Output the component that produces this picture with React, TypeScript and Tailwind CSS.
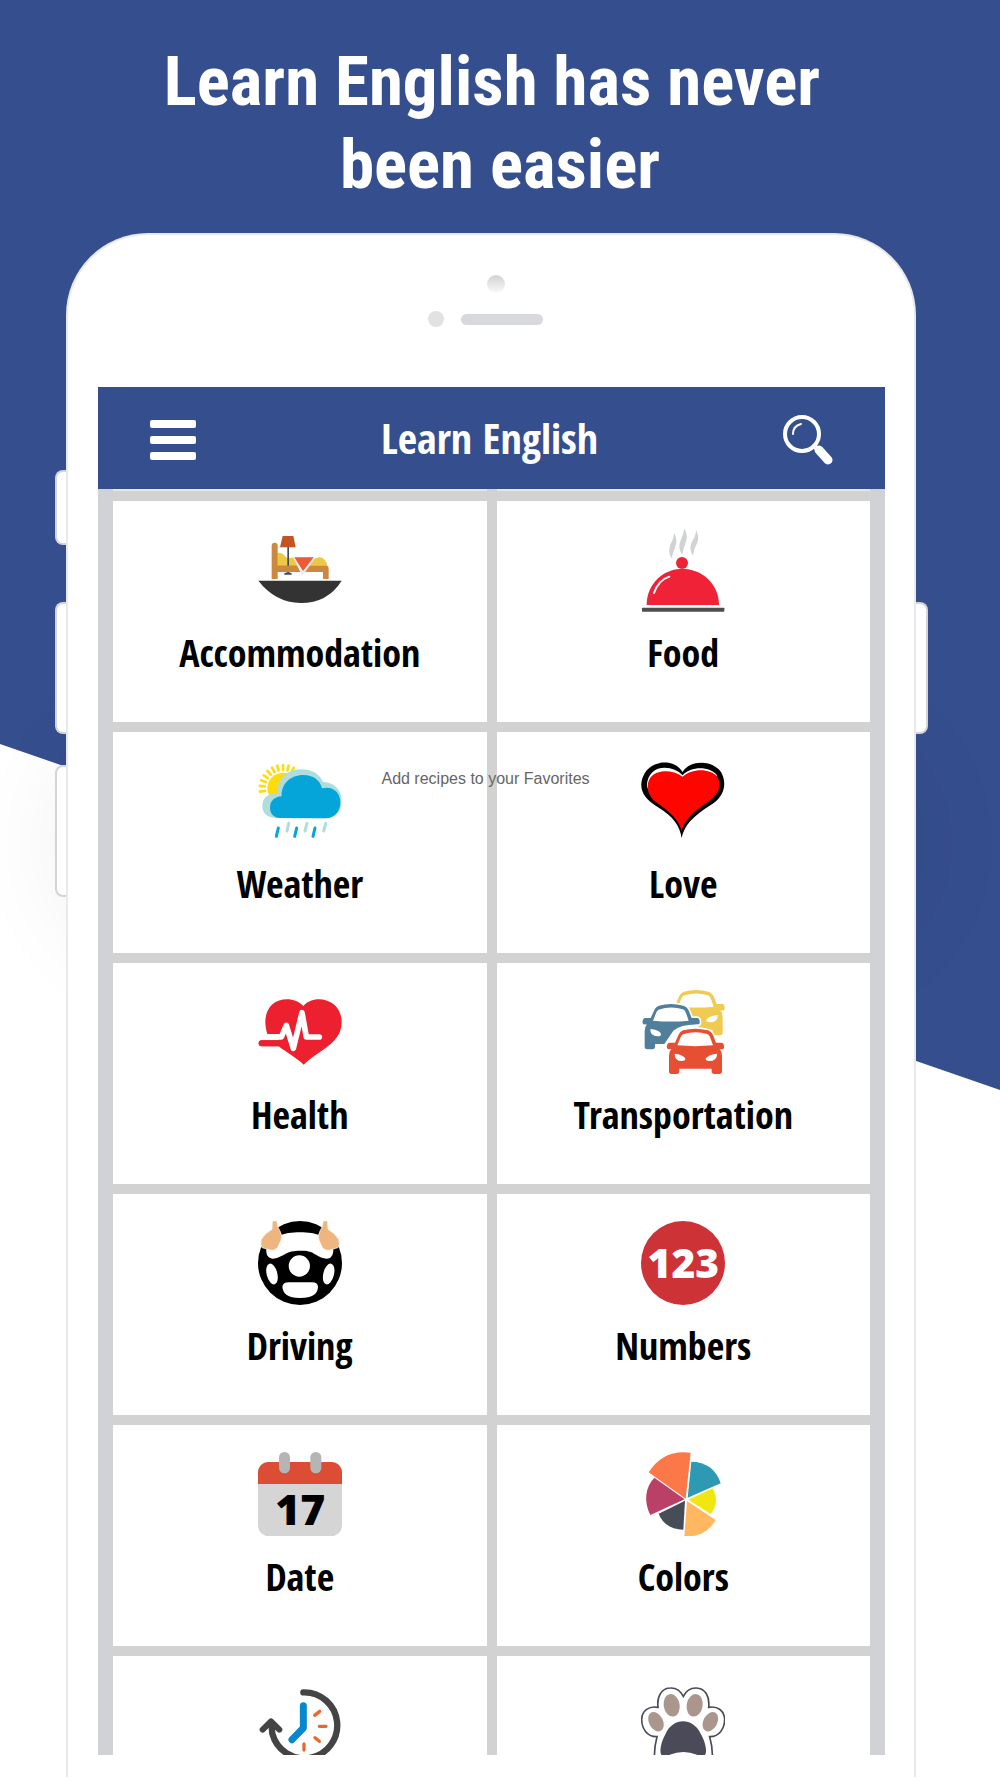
import type { ReactNode } from "react";
import clsx from "clsx";

function Icon({ viewBox, children }: { viewBox: string; children: ReactNode }) {
  return (
    <svg viewBox={viewBox} className="size-[84px] shrink-0" aria-hidden="true">
      {children}
    </svg>
  );
}

function BedIcon() {
  return (
    <Icon viewBox="54 51 252 252">
      <path d="M112 126 C122 124 130 128 135 136 L141 140 H162 L182 165 H112 Z" fill="#edc845" />
      <path d="M203 165 L222 144 Q245 130 260 155 L262 165 Z" fill="#edc845" />
      <path d="M95 104 a9 9 0 0 1 18 0 V164 H259 Q266 164 266 171 V204 H249 V183 H113 V204 H95 Z" fill="#cd8840" />
      <path d="M142 108 H147 V184 L155 187 V191 H133 V187 L142 184 Z" fill="#414d54" />
      <path d="M112 164 H180 V183 H112 Z" fill="#cd8840" />
      <path d="M128 75 H160 L167 109 H120 Z" fill="#c45424" />
      <path d="M159 139 H227 L187 195 Z" fill="#eeeeee" />
      <path d="M163 139 H221 L189 180 Z" fill="#ed5a36" />
      <path d="M55 209 H305 Q263 276 182 276 Q105 274 55 209 Z" fill="#333333" />
    </Icon>
  );
}

function FoodIcon() {
  return (
    <Icon viewBox="63 51 252 252">
      <g fill="#d0d2d3">
        <path d="M163 66 C174 91 168 101 163 115 Q157 128 156 143 C145 126 147 113 151 101 Q161 82 163 66 Z" />
        <path d="M193 52 C205 76 200 87 195 101 Q189 114 187 131 C175 114 177 101 182 88 Q191 70 193 52 Z" />
        <path d="M228 56 C239 80 234 91 228 103 Q221 116 219 134 C208 117 210 105 217 90 Q228 74 228 56 Z" />
      </g>
      <circle cx="186" cy="156" r="18" fill="#f02238" />
      <path d="M80 282 C80 218 130 176 180 174 H195 C247 177 297 219 297 282 Z" fill="#f02238" />
      <path d="M102 246 Q116 207 148 197" fill="none" stroke="#fff" strokeWidth="6" strokeLinecap="round" />
      <rect x="66" y="290" width="247" height="12" rx="2" fill="#4d4d4f" />
    </Icon>
  );
}

function WeatherIcon() {
  const rays = [-98, -84, -70, -56, -42, -28, -14, 0, 14, 28];
  return (
    <Icon viewBox="54 39 252 252">
      <circle cx="129" cy="127" r="47" fill="#ffdc0a" />
      {rays.map((deg) => (
        <path
          key={deg}
          d="M129 57 V72"
          stroke="#ffdc0a"
          strokeWidth="8"
          strokeLinecap="round"
          transform={`rotate(${deg} 129 127)`}
        />
      ))}
      <path d="M106 216 C78 214 67 198 67 179 C67 157 83 143 103 143 C118 143 110 137 114 122 C122 86 151 70 184 70 C216 70 239 84 249 108 C283 109 305 133 305 164 C305 194 287 217 256 217 Z" fill="#addddd" />
      <path d="M122 216 C101 216 90 202 90 185 C90 165 104 152 125 151 C123 113 152 87 190 87 C219 87 240 102 246 127 C278 119 301 139 301 169 C301 199 282 217 256 217 Z" fill="#05a5da" />
      <g fill="none" strokeWidth="9" strokeLinecap="round">
        <path d="M115 246 L109 271 M170 246 L164 271 M225 246 L219 271" stroke="#05a5da" />
        <path d="M146 232 L141 255 M201 232 L195 255 M257 232 L251 255" stroke="#addddd" />
      </g>
    </Icon>
  );
}

function LoveIcon() {
  return (
    <Icon viewBox="1203 39 252 252">
      <path d="M1328 78 C1350 40 1418 42 1443 78 C1464 115 1450 155 1411 178 C1359 211 1332 239 1325 276 C1319 239 1300 212 1254 184 C1212 159 1193 129 1210 90 C1228 45 1299 33 1328 78 Z" fill="#000" />
      <path d="M1328 88 C1352 60 1410 60 1431 88 L1424 96 Q1368 72 1328 98 Q1280 72 1236 98 L1226 125 H1221 C1219 96 1235 70 1264 66 Q1303 62 1328 88 Z" fill="#fff" />
      <path d="M1328 92 C1354 66 1412 66 1432 92 C1449 123 1433 149 1395 174 C1351 204 1330 231 1325 254 C1316 224 1297 205 1260 177 C1219 152 1216 117 1232 94 C1248 72 1294 68 1328 92 Z" fill="#ff0500" />
    </Icon>
  );
}

function HealthIcon() {
  return (
    <Icon viewBox="54 27 252 252">
      <path d="M190 75 C211 49 256 48 284 72 C309 96 312 138 291 168 C269 201 219 222 191 251 C166 228 142 216 116 196 H65 A9 9 0 0 1 65 178 H116 V159 H82 C72 129 73 92 97 70 C125 46 170 52 190 75 Z" fill="#ed2030" />
      <path d="M72 168 H124 L139 133 L160 202 L186 95 L199 168 H238" fill="none" stroke="#fff" strokeWidth="17" strokeLinecap="round" strokeLinejoin="round" />
      <path d="M65 178 H133 V196 H65 A9 9 0 0 1 65 178 Z" fill="#ed2030" />
    </Icon>
  );
}

// One car, drawn around its own windscreen so the three copies share a shape.
function Car({ x, y, color }: { x: number; y: number; color: string }) {
  return (
    <g transform={`translate(${x} ${y})`}>
      <path
        d="M51 5 Q86 -5 124 5 Q136 8 141 22 L149 42 H167 Q174 44 173 58 Q171 63 160 61 Q167 68 167 82 V130 Q166 136 160 136 H144 Q137 136 136 130 V120 H39 V130 Q38 136 32 136 H15 Q9 136 8 130 V82 Q8 68 15 61 Q4 63 2 58 Q0 44 8 42 H26 L36 20 Q41 8 51 5 Z"
        fill={color}
        stroke="#fff"
        strokeWidth="10"
        paintOrder="stroke"
      />
      <path d="M50 17 Q87 5 122 16 Q129 18 133 30 L140 50 Q87 55 33 50 L42 28 Q44 20 50 17 Z" fill="#fff" />
      <path d="M25 75 Q49 77 57 89 Q58 97 47 97 Q24 97 25 75 Z" fill="#fff" />
      <path d="M152 75 Q128 77 118 89 Q117 97 128 97 Q153 97 152 75 Z" fill="#fff" />
    </g>
  );
}

function CarsIcon() {
  return (
    <Icon viewBox="63 42 252 252">
      <Car x={141} y={42} color="#efcb52" />
      <path d="M130 73 H162 L150 190 H300 V178 H320 V300 H130 Z" fill="#fff" />
      <Car x={66} y={84} color="#507f9c" />
      <path d="M133 204 L160 164 Q185 144 235 146 V300 H120 V204 Z" fill="#fff" />
      <Car x={139} y={158} color="#e64f32" />
    </Icon>
  );
}

function DrivingIcon() {
  return (
    <Icon viewBox="54 45 252 252">
      <circle cx="180" cy="171" r="126" fill="#000" />
      <path d="M79 128 C92 92 132 79 180 79 C228 79 268 92 280 128 C281 153 268 161 252 157 C216 145 224 134 181 134 C137 134 141 146 107 157 C90 161 77 152 79 128 Z" fill="#fff" />
      <circle cx="178" cy="180" r="32" fill="#fff" />
      <ellipse cx="96" cy="204" rx="16" ry="32" transform="rotate(-14 96 204)" fill="#fff" />
      <ellipse cx="266" cy="204" rx="16" ry="32" transform="rotate(14 266 204)" fill="#fff" />
      <path d="M127 242 Q129 228 149 229 H213 Q233 228 234 242 C233 264 219 275 180 276 C143 275 129 264 127 242 Z" fill="#fff" />
      <path d="M97 46 Q108 41 111 49 Q112 64 120 75 Q129 91 123 103 L112 126 Q102 136 91 132 L66 125 Q60 117 64 100 Q74 82 96 70 Z" fill="#efb57f" stroke="#fff" strokeWidth="2" />
      <path d="M263 46 Q252 41 249 49 Q248 64 240 75 Q231 91 237 103 L248 126 Q258 136 269 132 L294 125 Q301 117 296 100 Q286 82 264 70 Z" fill="#efb57f" stroke="#fff" strokeWidth="2" />
    </Icon>
  );
}

function NumbersIcon() {
  return (
    <Icon viewBox="63 45 252 252">
      <circle cx="189" cy="171" r="126" fill="#cd3237" />
      <text x="190" y="215" textAnchor="middle" fill="#fff" className="font-['Open_Sans',sans-serif] text-[122px] font-extrabold">
        123
      </text>
    </Icon>
  );
}

function DateIcon() {
  return (
    <Icon viewBox="54 33 252 252">
      <rect x="54" y="63" width="252" height="222" rx="32" fill="#d5d5d5" />
      <path d="M54 129 V95 A32 32 0 0 1 86 63 H274 A32 32 0 0 1 306 95 V129 Z" fill="#dc4d35" />
      <rect x="117" y="33" width="33" height="64" rx="16" fill="#b5b5b5" />
      <rect x="211" y="33" width="33" height="64" rx="16" fill="#b5b5b5" />
      <text x="181" y="252" textAnchor="middle" fill="#000" className="font-['Open_Sans',sans-serif] text-[128px] font-extrabold">
        17
      </text>
    </Icon>
  );
}

function ColorsIcon() {
  return (
    <Icon viewBox="63 33 252 252">
      <path d="M197 173 L86 94 Q130 24 212 35 Z" fill="#fc7848" />
      <path d="M203 170 L214 62 C256 62 290 85 302 127 Z" fill="#2d99b2" />
      <path d="M205 176 L278 142 C293 170 291 197 272 219 Z" fill="#f1e60f" />
      <path d="M201 180 L287 237 C267 271 235 290 193 285 Z" fill="#ffb860" />
      <path d="M195 179 L190 266 C155 266 128 249 116 218 Z" fill="#464d56" />
      <path d="M194 175 L91 222 C70 181 76 138 103 110 Z" fill="#bb4067" />
    </Icon>
  );
}

function TimeIcon() {
  return (
    <Icon viewBox="54 66 252 252">
      <path d="M190 94 A99 99 0 1 1 97 218 L94 188" fill="none" stroke="#444444" strokeWidth="19" strokeLinecap="round" />
      <path d="M68 206 L93 181 L118 206" fill="none" stroke="#444444" strokeWidth="18" strokeLinecap="round" strokeLinejoin="round" />
      <path d="M190 134 V201 L156 236" fill="none" stroke="#0787cd" strokeWidth="21" strokeLinecap="round" strokeLinejoin="round" />
      <path d="M224 163 L239 151 M238 196 H258 M225 230 L238 241 M192 249 V267" fill="none" stroke="#e8692f" strokeWidth="10" strokeLinecap="round" />
    </Icon>
  );
}

function AnimalsIcon() {
  return (
    <Icon viewBox="1203 66 252 252">
      <path
        d="M1250 340 Q1236 282 1251 227 C1220 228 1205 202 1205 175 C1206 148 1227 134 1254 139 C1250 105 1266 81 1291 81 Q1317 80 1330 106 Q1343 80 1369 81 C1395 82 1410 105 1406 139 C1433 134 1453 149 1454 175 C1454 202 1438 228 1409 227 Q1425 282 1410 340"
        fill="#fff"
        stroke="#4b4a59"
        strokeWidth="5"
      />
      <g fill="#aa968c">
        <ellipse cx="1295" cy="133" rx="24" ry="34" transform="rotate(-10 1295 133)" />
        <ellipse cx="1364" cy="133" rx="24" ry="34" transform="rotate(10 1364 133)" />
        <ellipse cx="1248" cy="182" rx="21" ry="31" transform="rotate(-28 1248 182)" />
        <ellipse cx="1411" cy="182" rx="21" ry="31" transform="rotate(28 1411 182)" />
      </g>
      <path d="M1266 284 C1256 275 1263 241 1277 218 C1298 168 1360 168 1382 218 C1396 241 1404 275 1393 284 Q1383 289 1371 281 Q1330 265 1289 281 Q1277 288 1266 284 Z" fill="#4b4a59" />
    </Icon>
  );
}

const CATEGORIES = [
  { name: "Accommodation", icon: <BedIcon /> },
  { name: "Food", icon: <FoodIcon /> },
  { name: "Weather", icon: <WeatherIcon /> },
  { name: "Love", icon: <LoveIcon /> },
  { name: "Health", icon: <HealthIcon /> },
  { name: "Transportation", icon: <CarsIcon /> },
  { name: "Driving", icon: <DrivingIcon /> },
  { name: "Numbers", icon: <NumbersIcon /> },
  { name: "Date", icon: <DateIcon /> },
  { name: "Colors", icon: <ColorsIcon /> },
];

// The next row is cut off by the bottom of the screen, above its labels.
const PARTIAL = [
  { name: "Time", icon: <TimeIcon /> },
  { name: "Animals", icon: <AnimalsIcon /> },
];

function SideButton({ className }: { className: string }) {
  return <div className={clsx("absolute w-3 border-2 border-[#d3d4d6] bg-white", className)} />;
}

function AppBar() {
  return (
    <header className="flex h-[102px] items-center justify-between bg-[#354e8e] px-[52px] pt-1">
      <button type="button" aria-label="Menu" className="flex w-[46px] flex-col gap-2">
        <span className="h-2 rounded-xs bg-white" />
        <span className="h-2 rounded-xs bg-white" />
        <span className="h-2 rounded-xs bg-white" />
      </button>
      <h2 className="pb-1 text-[42px] leading-[48px] font-bold text-white">Learn English</h2>
      <button type="button" aria-label="Search">
        <svg viewBox="0 0 50 50" className="size-[50px]" fill="none" stroke="#fff" strokeLinecap="round">
          <circle cx="19" cy="19" r="17" strokeWidth="4" />
          <path d="M10 19 Q10 11 18 9" strokeWidth="2" />
          <path d="M36 35 L45 45" strokeWidth="9" />
          <path d="M31 31 L37 37" strokeWidth="4" />
        </svg>
      </button>
    </header>
  );
}

function Screen() {
  return (
    <section className="relative font-['Open_Sans_Condensed','Open_Sans',sans-serif]">
      <AppBar />
      <div className="bg-[#d1d2d5] px-[15px]">
        {/* last pixels of the row scrolled under the bar */}
        <div className="grid h-0.5 grid-cols-2 gap-[10px] bg-[#d2d2d2]">
          <div className="bg-[#e6e6e8]" />
          <div className="bg-[#e6e6e8]" />
        </div>
        <div className="grid grid-cols-2 gap-[10px] bg-[#d2d2d2] pt-[10px]">
          {CATEGORIES.map((c) => (
            <a key={c.name} href="#" className="flex h-[221px] flex-col items-center bg-white pt-[27px]">
              {c.icon}
              <span className="mt-4 text-[38px] leading-[48px] font-bold text-black">{c.name}</span>
            </a>
          ))}
          {PARTIAL.map((c) => (
            <a
              key={c.name}
              href="#"
              aria-label={c.name}
              className="flex h-[99px] flex-col items-center overflow-hidden bg-white pt-[27px]"
            >
              {c.icon}
            </a>
          ))}
        </div>
      </div>
      <p className="absolute inset-x-0 top-[381px] pr-3 text-center font-['Liberation_Sans',sans-serif] text-base leading-[22px] text-[#666]">
        Add recipes to your Favorites
      </p>
    </section>
  );
}

export default function App() {
  return (
    <main className="relative min-h-screen overflow-hidden bg-white">
      <div className="absolute inset-x-0 top-0 h-[1090px] bg-[#354e8e] [clip-path:polygon(0_0,100%_0,100%_100%,0_744px)]" />

      <h1 className="relative pt-10 text-center font-['Roboto_Condensed',Roboto,sans-serif] text-[69px] leading-[83px] font-bold text-white">
        <span className="block pr-4">Learn English has never</span>
        <span className="block">been easier</span>
      </h1>

      <div className="relative mt-[27px] mr-[8.4%] ml-[6.6%]">
        <div className="absolute inset-x-0 top-[500px] h-[220px] rounded-full shadow-[0_0_90px_20px_rgba(0,0,0,0.05)]" />
        <SideButton className="top-[237px] -left-[11px] h-[75px] rounded-l-lg border-r-0" />
        <SideButton className="top-[369px] -left-[11px] h-[132px] rounded-l-lg border-r-0" />
        <SideButton className="top-[532px] -left-[11px] h-[132px] rounded-l-lg border-r-0" />
        <SideButton className="top-[369px] -right-3 h-[132px] rounded-r-lg border-l-0" />

        <div className="relative rounded-t-[82px] border-x-2 border-t-2 border-[#e8e9ec] bg-white pr-[29px] pb-[22px] pl-[30px]">
          <div className="flex h-[152px] flex-col items-center gap-[18px] pt-10">
            <div className="ml-2 size-[18px] rounded-full bg-linear-to-b from-[#d2d2d5] to-[#fafafa]" />
            <div className="flex items-center gap-[17px] pr-3">
              <div className="size-4 rounded-full bg-[#e1e2e4]" />
              <div className="h-[11px] w-[82px] rounded-full bg-[#d8d9dd]" />
            </div>
          </div>
          <Screen />
        </div>
      </div>
    </main>
  );
}
